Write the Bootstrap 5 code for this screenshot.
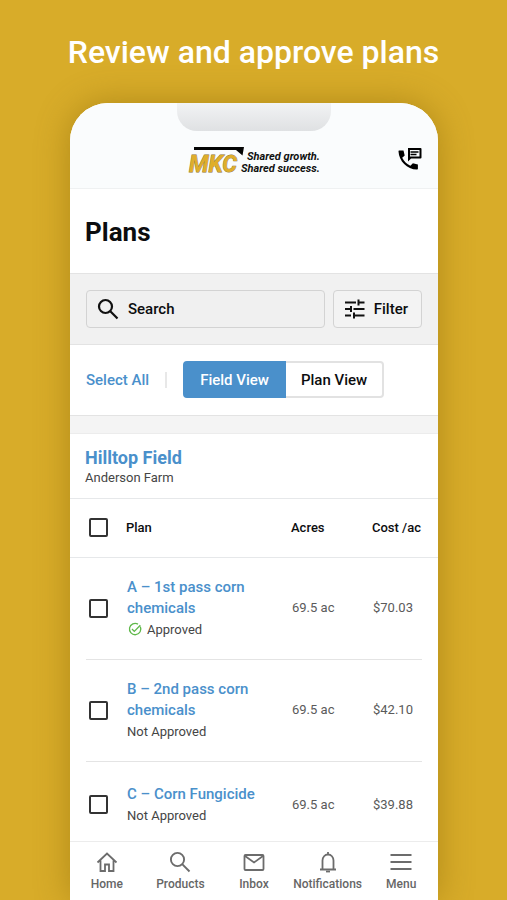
<!DOCTYPE html>
<html lang="en">
<head>
<meta charset="utf-8">
<meta name="viewport" content="width=device-width, initial-scale=1">
<title>Plans</title>
<link href="https://cdn.jsdelivr.net/npm/bootstrap@5.3.0/dist/css/bootstrap.min.css" rel="stylesheet">
<style>
  body { font-family: Roboto, "Liberation Sans", sans-serif; background: #d8ac29; color: #0c0d0f; font-size: 15px; line-height: 20px; }
  a { color: #4a90cb; text-decoration: none; }
  .promo { font-size: 32px; line-height: 40px; padding: 32px 0 31px; }
  .stage { padding: 0 69px 0 70px; }
  .phone { border-radius: 38px 38px 0 0; box-shadow: 0 0 34px rgba(120, 88, 0, .42); }
  .brandbar { background: #fafcfd; border-bottom: 1px solid #eff1f2; padding-bottom: 15px; }
  .notch { width: 154px; height: 28px; border-radius: 0 0 20px 20px; background: linear-gradient(#f2f3f4, #dfe1e3); }
  .brandrow { height: 42px; padding: 0 16px; }
  .call { padding-top: 14px; }
  .title { font-size: 26px; line-height: 32px; padding: 27px 15px 25px; }
  .tools { background: #f1f1f1; border-top: 1px solid #e3e3e3; border-bottom: 1px solid #e3e3e3; padding: 16px; }
  .field { height: 38px; border: 1px solid #d3d3d3; border-radius: 4px; background: #f0f0f0; }
  .find { padding-left: 9px; }
  .find input { border: 0; background: transparent; outline: 0; font-weight: 500; color: #0c0d0f; min-width: 0; }
  .find input::placeholder { color: #0c0d0f; opacity: 1; }
  .filter { padding: 0 13px 0 10px; background: #f3f3f3; color: #0c0d0f; }
  .views { padding: 16px 16px 17px; }
  .rule { width: 2px; height: 16px; background: #e8e8e8; margin: 0 16px; }
  .seg { height: 37px; padding: 0 15px; border: 2px solid #e2e2e2; background: #fff; color: #0c0d0f; }
  .seg.on { background: #4a90cb; border-color: #4a90cb; color: #fff; border-radius: 4px 0 0 4px; }
  .seg.off { border-left: 0; border-radius: 0 4px 4px 0; }
  .band { height: 19px; background: #f4f4f4; border-top: 1px solid #e3e3e3; border-bottom: 1px solid #ececec; }
  .farm { padding: 12px 15px; border-bottom: 1px solid #e6e8ea; }
  .farm h2 { font-size: 18px; line-height: 24px; }
  .farm p { font-size: 13px; line-height: 16px; color: #454545; }
  .plans { table-layout: fixed; font-size: 13px; }
  .plans th { font-weight: 500; height: 58px; border-bottom: 1px solid #e6e8ea; padding: 0; }
  .plans td { padding-top: 19px; padding-bottom: 20px; color: #5a5a5a; }
  .plans tbody tr { background: linear-gradient(#e4e4e4, #e4e4e4) no-repeat 16px 100% / calc(100% - 32px) 1px; }
  .plans tbody tr:last-child { background: none; }
  .plans tbody tr:last-child td { padding-top: 22px; padding-bottom: 15px; }
  .plans .tick { padding-left: 19px; width: 56px; }
  .plans .acres { width: 81px; }
  .plans .cost { width: 66px; }
  .plans td a { font-size: 15px; line-height: 21px; }
  .plans td.name { padding-left: 1px; padding-right: 12px; }
  .state { color: #454545; line-height: 21px; }
  .box { appearance: none; width: 19px; height: 19px; border: 2px solid #333; border-radius: 2px; background: #fff; margin: 0; }
  .box:checked { background: #4a90cb; }
  .tabs { border-top: 1px solid #ececec; padding: 8px 0 9px; }
  .tabs a { color: #666; font-size: 12px; line-height: 14px; gap: 3px; width: 74px; }
</style>
<script src="https://cdn.jsdelivr.net/npm/bootstrap@5.3.0/dist/js/bootstrap.bundle.min.js"></script>
</head>
<body>
<div class="d-flex flex-column min-vh-100">
  <h1 class="promo fw-medium text-white text-center m-0">Review and approve plans</h1>
  <main class="stage flex-grow-1 d-flex">
    <div class="phone bg-white flex-grow-1 d-flex flex-column overflow-hidden">
      <header class="brandbar">
        <div class="notch mx-auto"></div>
        <div class="brandrow d-flex justify-content-end align-items-center">
          <div class="flex-grow-1 d-flex justify-content-center ps-4 pt-3">
            <svg width="134" height="32" viewBox="0 0 134 32" role="img" aria-label="MKC Shared growth. Shared success." font-family="Roboto, sans-serif" font-style="italic" font-weight="700">
              <path d="M7 3H57L55.500 11.500L49 6H7Z" fill="#050505"/>
              <text x="2" y="27.500" font-size="23" font-weight="700" fill="#dfae2b" stroke="#8a7030" stroke-width=".8" paint-order="stroke">MKC</text>
              <text x="60" y="16" font-size="11" fill="#111">Shared growth.</text>
              <text x="54" y="28" font-size="11" fill="#111">Shared success.</text>
            </svg>
          </div>
          <a href="#" class="call d-flex" aria-label="Contact us">
            <svg width="24" height="24" viewBox="0 0 24 24">
              <path d="M1 3.500h4.500l1.200 5-2.500 2.300c1.800 3.600 4.500 6.200 8.200 8l2.500-2.600 5 1.200v4.200c0 .7-.4 1-1 1C9 22.500 1 14 .5 4.500c0-.6.200-1 .5-1Z" fill="#000"/>
              <path fill-rule="evenodd" d="M10 1h12.500a1 1 0 0 1 1 1v8.500a1 1 0 0 1-1 1H13L10 14.500ZM12 3v6.500h9.500V3Z" fill="#000"/>
              <path d="M12.500 5h8M12.500 7.500h6" stroke="#000" stroke-width="1.600"/>
            </svg>
          </a>
        </div>
      </header>
      <h2 class="title fw-bold m-0">Plans</h2>
      <form class="tools d-flex gap-2">
        <label class="find field d-flex align-items-center flex-grow-1" for="q">
          <svg class="flex-shrink-0 me-2" width="24" height="24" viewBox="0 0 24 24" fill="none" stroke="#111" stroke-width="2.200"><circle cx="9.500" cy="9.500" r="6.500"/><path d="M14.300 14.300L21.500 21.500"/></svg>
          <input id="q" type="text" class="w-100 p-0" placeholder="Search" aria-label="Search">
        </label>
        <button type="button" class="filter field fw-medium d-flex align-items-center gap-2">
          <svg width="22" height="22" viewBox="0 0 22 22" fill="none" stroke="#111" stroke-width="2"><path d="M1 4.500h11M14.500 4.500h6M14.500 1.500v6M1 11h5.500M9.500 11h11M7 8v6M1 17.500h6M10 17.500h10.500M10 14.500v6"/></svg>
          <span>Filter</span>
        </button>
      </form>
      <div class="views d-flex align-items-center">
        <a href="#" class="fw-medium text-nowrap">Select All</a>
        <span class="rule"></span>
        <div class="d-flex" role="group" aria-label="View">
          <button type="button" class="seg on fw-medium text-nowrap">Field View</button>
          <button type="button" class="seg off fw-medium text-nowrap">Plan View</button>
        </div>
      </div>
      <div class="band"></div>
      <section class="farm">
        <h2 class="fw-bold m-0"><a href="#">Hilltop Field</a></h2>
        <p class="m-0">Anderson Farm</p>
      </section>
      <table class="plans w-100">
        <thead>
          <tr><th class="tick"><input class="box d-block" type="checkbox" aria-label="Select every plan"></th><th>Plan</th><th class="acres">Acres</th><th class="cost">Cost /ac</th></tr>
        </thead>
        <tbody>
          <tr>
            <td class="tick"><input class="box d-block" type="checkbox" aria-label="Select plan A"></td>
            <td class="name"><a class="d-block fw-medium" href="#">A – 1st pass corn chemicals</a>
              <div class="state d-flex align-items-center gap-1"><svg width="16" height="16" viewBox="0 0 16 16" fill="none" stroke="#5fb84a" stroke-width="1.300"><path d="M13.300 5.600A5.700 5.700 0 1 1 11 3.100"/><path d="M5 8l2.300 2.400 6-6.200"/></svg><span>Approved</span></div></td>
            <td>69.5 ac</td><td>$70.03</td>
          </tr>
          <tr>
            <td class="tick"><input class="box d-block" type="checkbox" aria-label="Select plan B"></td>
            <td class="name"><a class="d-block fw-medium" href="#">B – 2nd pass corn chemicals</a><div class="state">Not Approved</div></td>
            <td>69.5 ac</td><td>$42.10</td>
          </tr>
          <tr>
            <td class="tick"><input class="box d-block" type="checkbox" aria-label="Select plan C"></td>
            <td class="name"><a class="d-block fw-medium text-nowrap" href="#">C – Corn Fungicide</a><div class="state">Not Approved</div></td>
            <td>69.5 ac</td><td>$39.88</td>
          </tr>
        </tbody>
      </table>
      <nav class="tabs d-flex justify-content-between mt-auto" aria-label="Main">
        <a href="#" class="d-flex flex-column align-items-center fw-medium"><svg width="24" height="24" viewBox="0 0 24 24" fill="none" stroke="#6c6c6c" stroke-width="1.800"><path d="M2.500 12.500L12 3.500l9.500 9M5.500 10.500V21H10v-6.500h4V21h4.500V10.500"/></svg>Home</a>
        <a href="#" class="d-flex flex-column align-items-center fw-medium"><svg width="24" height="24" viewBox="0 0 24 24" fill="none" stroke="#6c6c6c" stroke-width="1.900"><circle cx="9.500" cy="9.500" r="6.600"/><path d="M14.200 14.200L21.500 21.500"/></svg>Products</a>
        <a href="#" class="d-flex flex-column align-items-center fw-medium"><svg width="24" height="24" viewBox="0 0 24 24" fill="none" stroke="#6c6c6c" stroke-width="1.800"><rect x="2.500" y="5" width="19" height="15" rx="1"/><path d="M3 6l9 6.500L21 6"/></svg>Inbox</a>
        <a href="#" class="d-flex flex-column align-items-center fw-medium"><svg width="24" height="24" viewBox="0 0 24 24" fill="none" stroke="#6c6c6c" stroke-width="1.800"><path d="M4 19.500h16M6.500 19v-8.500c0-3.300 2.300-6 5.500-6s5.500 2.700 5.500 6V19M12 4.500v-2.500"/><path d="M10 21.500h4"/></svg>Notifications</a>
        <a href="#" class="d-flex flex-column align-items-center fw-medium"><svg width="24" height="24" viewBox="0 0 24 24" fill="none" stroke="#6c6c6c" stroke-width="2"><path d="M1.500 5h21M1.500 12h21M1.500 19h21"/></svg>Menu</a>
      </nav>
    </div>
  </main>
</div>
</body>
</html>
